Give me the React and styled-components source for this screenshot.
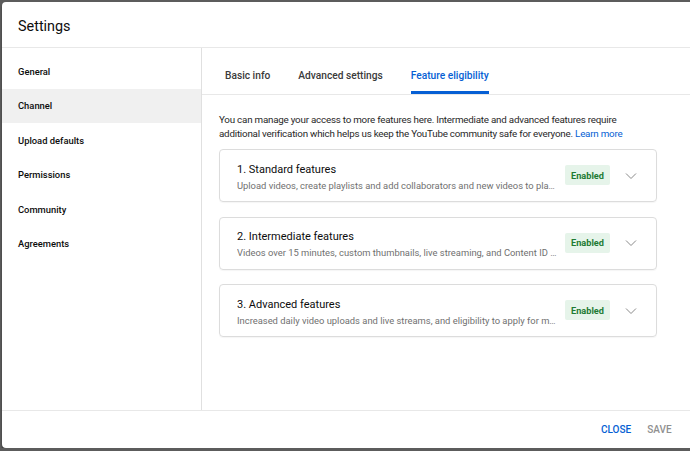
import React from "react";
import styled, { createGlobalStyle } from "styled-components";

const GlobalStyle = createGlobalStyle`
  html, body {
    margin: 0;
    padding: 0;
    background: #5c5c5c;
    overflow: hidden;
    font-family: Roboto, "Noto Sans", Arial, sans-serif;
  }
`;

const navItems = [
  "General",
  "Channel",
  "Upload defaults",
  "Permissions",
  "Community",
  "Agreements",
];

const tabs = ["Basic info", "Advanced settings", "Feature eligibility"];

const features = [
  {
    title: "1. Standard features",
    text: "Upload videos, create playlists and add collaborators and new videos to playlists",
  },
  {
    title: "2. Intermediate features",
    text: "Videos over 15 minutes, custom thumbnails, live streaming, and Content ID appeals",
  },
  {
    title: "3. Advanced features",
    text: "Increased daily video uploads and live streams, and eligibility to apply for monetization",
  },
];

const Chevron = () => (
  <svg width="14" height="14" viewBox="0 0 14 14" fill="none">
    <path d="M2 4.5 L7 9.5 L12 4.5" stroke="#8a8a8a" strokeWidth="1" />
  </svg>
);

const App = () => {
  return (
    <>
      <GlobalStyle />
      <Dialog>
        <Header>Settings</Header>
        <Body>
          <Sidebar>
            {navItems.map((item) => (
              <NavItem key={item} $active={item === "Channel"}>
                {item}
              </NavItem>
            ))}
          </Sidebar>
          <Main>
            <TabBar>
              {tabs.map((tab) => (
                <Tab key={tab} $active={tab === "Feature eligibility"}>
                  {tab}
                </Tab>
              ))}
            </TabBar>
            <Content>
              <Intro>
                You can manage your access to more features here. Intermediate
                and advanced features require additional verification which
                helps us keep the YouTube community safe for everyone.{" "}
                <LearnMore>Learn more</LearnMore>
              </Intro>
              <CardList>
                {features.map((f) => (
                  <Card key={f.title}>
                    <CardText>
                      <CardTitle>{f.title}</CardTitle>
                      <CardSub>{f.text}</CardSub>
                    </CardText>
                    <Badge>Enabled</Badge>
                    <ExpandButton>
                      <Chevron />
                    </ExpandButton>
                  </Card>
                ))}
              </CardList>
            </Content>
          </Main>
        </Body>
        <Footer>
          <FooterButton $primary>CLOSE</FooterButton>
          <FooterButton>SAVE</FooterButton>
        </Footer>
      </Dialog>
    </>
  );
};

export default App;

const Dialog = styled.div`
  margin: 2px 0 0 2px;
  width: 720px;
  height: 446px;
  background: #fff;
  border-radius: 4px 0 0 4px;
  display: flex;
  flex-direction: column;
  box-shadow: 0 2px 2px rgba(0, 0, 0, 0.5);
`;

const Header = styled.div`
  height: 46px;
  box-sizing: border-box;
  flex-shrink: 0;
  display: flex;
  align-items: center;
  padding: 3px 16px 0;
  font-size: 14.4px;
  color: #0d0d0d;
  border-bottom: 1px solid #e8e8e8;
`;

const Body = styled.div`
  flex: 1;
  display: flex;
  min-height: 0;
`;

const Sidebar = styled.div`
  width: 199px;
  flex-shrink: 0;
  padding-top: 6px;
  border-right: 1px solid #e0e0e0;
`;

const NavItem = styled.div`
  height: 34.5px;
  display: flex;
  align-items: center;
  padding-left: 16px;
  font-size: 9.4px;
  font-weight: 500;
  color: #0d0d0d;
  background: ${(p) => (p.$active ? "#f0f0f0" : "transparent")};
`;

const Main = styled.div`
  width: 488px;
  display: flex;
  flex-direction: column;
`;

const TabBar = styled.div`
  height: 46px;
  display: flex;
  align-items: flex-end;
  padding-left: 9px;
  border-bottom: 1px solid #e8e8e8;
`;

const Tab = styled.div`
  margin: 0 14px;
  height: 25px;
  box-sizing: border-box;
  padding-top: 1px;
  font-size: 10.2px;
  font-weight: 500;
  color: ${(p) => (p.$active ? "#065fd4" : "#3a3a3a")};
  border-bottom: 3px solid ${(p) => (p.$active ? "#065fd4" : "transparent")};
`;

const Content = styled.div`
  padding: 18px 33px 0 17px;
`;

const Intro = styled.p`
  margin: 0;
  font-size: 9.8px;
  letter-spacing: -0.22px;
  line-height: 14px;
  color: #282828;
`;

const LearnMore = styled.a`
  color: #065fd4;
  text-decoration: none;
`;

const CardList = styled.div`
  margin-top: 8px;
  display: flex;
  flex-direction: column;
  gap: 14.5px;
`;

const Card = styled.div`
  height: 53px;
  box-sizing: border-box;
  border: 1px solid #dcdcdc;
  border-radius: 4px;
  box-shadow: 0 1px 1px rgba(0, 0, 0, 0.04);
  display: flex;
  align-items: center;
  padding: 0 18px 0 17px;
`;

const CardText = styled.div`
  flex: 1;
  min-width: 0;
  display: flex;
  flex-direction: column;
  gap: 4px;
  padding-top: 2px;
`;

const CardTitle = styled.div`
  font-size: 11px;
  color: #0d0d0d;
`;

const CardSub = styled.div`
  font-size: 9.4px;
  color: #707070;
  white-space: nowrap;
  overflow: hidden;
  text-overflow: ellipsis;
  padding-right: 6px;
`;

const Badge = styled.div`
  width: 45px;
  height: 20px;
  flex-shrink: 0;
  display: flex;
  align-items: center;
  justify-content: center;
  background: #e6f4ea;
  color: #1e7b34;
  font-size: 9.2px;
  font-weight: 700;
  border-radius: 2px;
  margin-top: -1px;
`;

const ExpandButton = styled.div`
  margin-left: 14px;
  width: 14px;
  flex-shrink: 0;
  display: flex;
  align-items: center;
  justify-content: center;
`;

const Footer = styled.div`
  height: 37px;
  flex-shrink: 0;
  border-top: 1px solid #e8e8e8;
  display: flex;
  align-items: center;
  padding-left: 599px;
  gap: 16px;
`;

const FooterButton = styled.div`
  font-size: 10px;
  font-weight: 500;
  color: ${(p) => (p.$primary ? "#065fd4" : "#909090")};
`;
